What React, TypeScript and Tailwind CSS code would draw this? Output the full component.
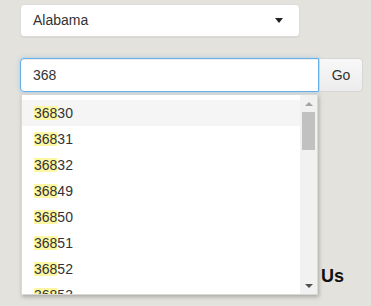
import React from "react";

const zips = ["36830", "36831", "36832", "36849", "36850", "36851", "36852", "36853"];

export default function App() {
  return (
    <div className="relative w-[371px] h-[306px] overflow-hidden bg-[#e3e2dc] text-[14px] text-[#333]" style={{ fontFamily: '"Liberation Sans", Arial, sans-serif' }}>
      <div className="pl-5 pt-1">
        <div className="flex items-center justify-between w-[280px] h-[33px] bg-white border border-[#dcdcdc] rounded-[4px] shadow-[0_1px_1px_rgba(0,0,0,0.06)] pl-3 pr-4">
          <span>Alabama</span>
          <span className="w-0 h-0 border-l-[4px] border-r-[4px] border-t-[5px] border-l-transparent border-r-transparent border-t-[#222]" />
        </div>
        <div className="flex mt-[21px] w-[343px] h-[34px]">
          <div className="flex items-center flex-1 bg-white border border-[#66afe9] rounded-l-[4px] shadow-[inset_0_1px_1px_rgba(0,0,0,0.075),0_0_4px_rgba(102,175,233,0.5)] pl-3">
            368
          </div>
          <button className="w-[44px] h-[34px] flex items-center justify-center border border-[#d6d6d6] rounded-r-[4px] bg-gradient-to-b from-[#f8f8f8] to-[#ececec] text-[#333] text-[14px]">
            Go
          </button>
        </div>
        <div className="mt-[173px] ml-[301px] font-bold text-[18px] text-[#111] leading-[22px]">Us</div>
      </div>
      <div className="absolute left-[21px] top-[94px] w-[297px] h-[201px] flex bg-white border border-[#d8d8d8] shadow-[1px_2px_4px_rgba(0,0,0,0.25)] overflow-hidden">
        <div className="flex-1 pt-[5px]">
          {zips.map((z, i) => (
            <div key={z} className={`h-[26px] flex items-center pl-3 ${i === 0 ? "bg-[#f5f5f5]" : ""}`}>
              <span className="inline-block h-[14px] leading-[14px] bg-[#fdf6a3]">{z.slice(0, 3)}</span>
              <span className="leading-[14px]">{z.slice(3)}</span>
            </div>
          ))}
        </div>
        <div className="w-[17px] h-full bg-[#f1f1f1] flex flex-col items-center">
          <div className="h-[17px] flex items-center justify-center">
            <span className="w-0 h-0 border-l-[4px] border-r-[4px] border-b-[4px] border-l-transparent border-r-transparent border-b-[#a3a3a3]" />
          </div>
          <div className="w-[13px] h-[38px] bg-[#c1c1c1]" />
          <div className="flex-1" />
          <div className="h-[17px] flex items-center justify-center">
            <span className="w-0 h-0 border-l-[4px] border-r-[4px] border-t-[4px] border-l-transparent border-r-transparent border-t-[#505050]" />
          </div>
        </div>
      </div>
    </div>
  );
}
